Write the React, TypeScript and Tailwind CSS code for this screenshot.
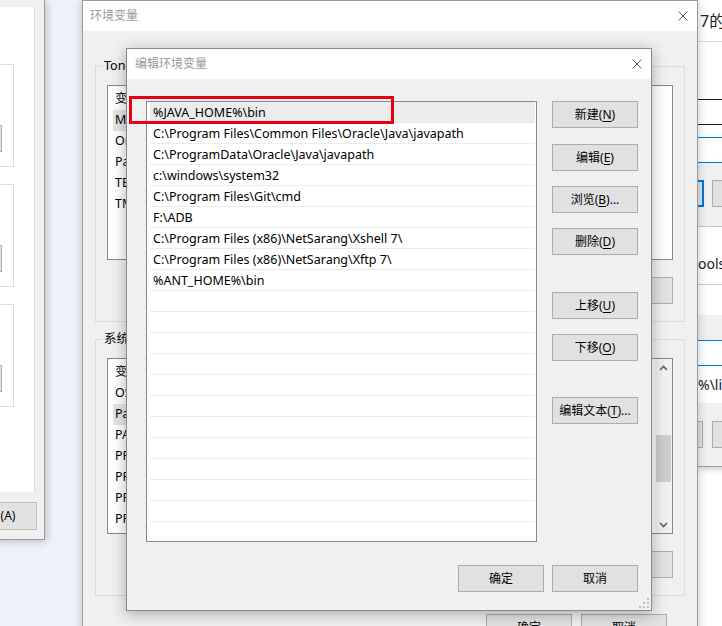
import React from 'react';

type Kids = { children?: React.ReactNode; className?: string };

const Btn = ({ children, className = '' }: Kids) => (
  <div
    className={`flex shrink-0 items-center justify-center border border-[#adadad] bg-[#e1e1e1] text-[12px] text-black ${className}`}
  >
    {children}
  </div>
);

// underlined access key
const U = ({ children }: Kids) => <span className="underline underline-offset-[2px]">{children}</span>;

const CloseX = () => (
  <svg width="10" height="10" viewBox="0 0 10 10" className="shrink-0">
    <path d="M0.5 0.5 L9.5 9.5 M9.5 0.5 L0.5 9.5" stroke="#555" strokeWidth="1" fill="none" />
  </svg>
);

const Chevron = ({ up }: { up?: boolean }) => (
  <svg width="9" height="6" viewBox="0 0 9 6">
    <path d={up ? 'M1 5 L4.5 1.5 L8 5' : 'M1 1 L4.5 4.5 L8 1'} stroke="#606060" strokeWidth="1.6" fill="none" />
  </svg>
);

const GroupBox = ({ label, children, className = '' }: Kids & { label: string }) => (
  <div className={`relative shrink-0 border border-[#dcdcdc] px-[11px] pt-[18px] ${className}`}>
    <span className="absolute -top-[9px] left-[6px] bg-[#f0f0f0] px-[2px] text-[12.5px] leading-[16px] text-black">
      {label}
    </span>
    {children}
  </div>
);

const VarList = ({
  rows,
  selected,
  scroll,
  className = '',
}: {
  rows: [string, string][];
  selected: number;
  scroll?: boolean;
  className?: string;
}) => (
  <div className={`flex overflow-hidden border border-[#828790] bg-white ${className}`}>
    <div className="flex-1 pt-[3px]">
      {rows.map(([name, value], i) => (
        <div
          key={i}
          className={`ml-[5px] flex h-[21px] w-[500px] items-center pl-[2px] text-[12.5px] text-black ${
            i === selected ? 'bg-[#e5e5e5]' : ''
          }`}
        >
          <span className="w-[200px] shrink-0">{name}</span>
          <span className="whitespace-nowrap">{value}</span>
        </div>
      ))}
    </div>
    {scroll && (
      <div className="flex w-[17px] shrink-0 flex-col bg-[#f0f0f0]">
        <div className="flex h-[17px] items-center justify-center">
          <Chevron up />
        </div>
        <div className="ml-[1px] mt-[59px] h-[47px] w-[15px] bg-[#cdcdcd]" />
        <div className="flex-1" />
        <div className="flex h-[17px] items-center justify-center">
          <Chevron />
        </div>
      </div>
    )}
  </div>
);

const userRows: [string, string][] = [
  ['变量', '值'],
  ['MAVEN_HOME', 'D:\\apache-maven'],
  ['OneDrive', 'C:\\Users\\Tong\\OneDrive'],
  ['Path', '%USERPROFILE%\\AppData\\Local'],
  ['TEMP', '%USERPROFILE%\\AppData\\Local\\Temp'],
  ['TMP', '%USERPROFILE%\\AppData\\Local\\Temp'],
];

const sysRows: [string, string][] = [
  ['变量', '值'],
  ['OS', 'Windows_NT'],
  ['Path', '%JAVA_HOME%\\bin;C:\\Program Files'],
  ['PATHEXT', '.COM;.EXE;.BAT;.CMD'],
  ['PROCESSOR_ARCHITECTURE', 'AMD64'],
  ['PROCESSOR_IDENTIFIER', 'Intel64 Family 6'],
  ['PROCESSOR_LEVEL', '6'],
  ['PROCESSOR_REVISION', '9e0a'],
];

const paths = [
  '%JAVA_HOME%\\bin',
  'C:\\Program Files\\Common Files\\Oracle\\Java\\javapath',
  'C:\\ProgramData\\Oracle\\Java\\javapath',
  'c:\\windows\\system32',
  'C:\\Program Files\\Git\\cmd',
  'F:\\ADB',
  'C:\\Program Files (x86)\\NetSarang\\Xshell 7\\',
  'C:\\Program Files (x86)\\NetSarang\\Xftp 7\\',
  '%ANT_HOME%\\bin',
];
const pathRows = [...paths, ...Array(12).fill('')];

const LeftWindow = () => (
  <div className="absolute left-[-200px] top-0 flex h-[540px] w-[245px] flex-col border-b border-r border-[#9d9d9d] bg-[#f0f0f0] shadow-[2px_2px_8px_rgba(0,0,0,0.2)]">
    <div className="ml-auto mr-[9px] mt-[7px] flex h-[485px] w-[220px] flex-col items-end border-r border-[#d9d9d9] bg-white pr-[20px]">
      {[57, 17, 17].map((mt, i) => (
        <div
          key={i}
          className={`flex h-[103px] w-[180px] shrink-0 justify-end border border-[#dcdcdc] pr-[11px] pt-[60px] ${
            mt === 57 ? 'mt-[57px]' : 'mt-[17px]'
          }`}
        >
          <Btn className="h-[27px] w-[86px]">编辑(E)...</Btn>
        </div>
      ))}
    </div>
    <Btn className="ml-auto mr-[7px] mt-[10px] h-[28px] w-[86px] border-[#bfbfbf] bg-[#cccccc] pl-[4px] text-[#8a8a8a]">
      应用(A)
    </Btn>
  </div>
);

const MiddleWindow = () => (
  <div className="absolute left-[82px] top-0 flex h-[660px] w-[616px] flex-col border border-[#9a9a9a] bg-[#f0f0f0] shadow-[0_0_10px_rgba(0,0,0,0.22)]">
    <div className="flex h-[30px] shrink-0 items-center justify-between bg-white pl-[7px] pr-[9px] text-[12px] text-[#9a9a9a]">
      <span>环境变量</span>
      <CloseX />
    </div>
    <div className="flex flex-col px-[12px]">
      <GroupBox label="Tong 的用户变量(U)" className="mt-[35px] h-[256px]">
        <VarList rows={userRows} selected={1} className="h-[175px]" />
        <div className="mt-[17px] flex justify-end gap-[9px]">
          <Btn className="h-[27px] w-[86px]">新建(N)...</Btn>
          <Btn className="h-[27px] w-[86px]">编辑(E)...</Btn>
          <Btn className="h-[27px] w-[86px]">删除(D)</Btn>
        </div>
      </GroupBox>
      <GroupBox label="系统变量(S)" className="mt-[17px] h-[257px]">
        <VarList rows={sysRows} selected={2} scroll className="h-[176px]" />
        <div className="mt-[17px] flex justify-end gap-[9px]">
          <Btn className="h-[27px] w-[86px]">新建(W)...</Btn>
          <Btn className="h-[27px] w-[86px]">编辑(I)...</Btn>
          <Btn className="h-[27px] w-[86px]">删除(L)</Btn>
        </div>
      </GroupBox>
      <div className="mr-[18px] mt-[18px] flex justify-end gap-[9px]">
        <Btn className="h-[27px] w-[86px]">确定</Btn>
        <Btn className="h-[27px] w-[86px]">取消</Btn>
      </div>
    </div>
  </div>
);

const RightWindow = () => (
  <div className="absolute left-[698px] top-0 flex h-[467px] w-[200px] flex-col border-b border-[#a0a0a0] bg-white shadow-[0_2px_6px_rgba(0,0,0,0.2)]">
    <div className="flex h-[41px] shrink-0 items-center pl-[2px] text-[16px] text-[#222]">7的属性</div>
    <div className="h-[1px] bg-[#dadada]" />
    <div className="h-[57px]" />
    <div className="h-[1px] bg-[#1a1a1a]" />
    <div className="h-[24px]" />
    <div className="h-[1px] bg-[#1a1a1a]" />
    <div className="h-[12px]" />
    <div className="h-[1px] bg-[#0078d7]" />
    <div className="h-[24px]" />
    <div className="h-[1px] bg-[#0078d7]" />
    <div className="flex h-[63px] shrink-0 gap-[8px] bg-[#f0f0f0] pt-[17px]">
      <div className="h-[27px] w-[6px] border-y-2 border-r-2 border-[#0078d7] bg-[#e1e1e1]" />
      <div className="h-[27px] w-[40px] border border-[#adadad] bg-[#e1e1e1]" />
    </div>
    <div className="h-[1px] bg-[#c8c8c8]" />
    <div className="flex h-[57px] shrink-0 items-end pb-[10px] text-[14px] text-[#222]">ools</div>
    <div className="h-[1px] bg-[#d0d0d0]" />
    <div className="h-[30px]" />
    <div className="h-[25px] bg-[#f0f0f0]" />
    <div className="h-[1px] bg-[#0078d7]" />
    <div className="h-[24px]" />
    <div className="h-[1px] bg-[#0078d7]" />
    <div className="flex h-[37px] shrink-0 items-center text-[14px] text-[#222]">%\lib</div>
    <div className="flex flex-1 gap-[9px] bg-[#f0f0f0] pt-[18px]">
      <div className="h-[27px] w-[5px] border-y border-r border-[#adadad] bg-[#e1e1e1]" />
      <div className="h-[27px] w-[40px] border border-[#adadad] bg-[#e1e1e1]" />
    </div>
  </div>
);

const EditDialog = () => (
  <div className="absolute left-[126px] top-[48px] flex h-[563px] w-[526px] flex-col border border-[#8a8a8a] bg-[#f0f0f0] shadow-[0_3px_14px_rgba(0,0,0,0.3)]">
    <div className="flex h-[30px] shrink-0 items-center justify-between bg-white pl-[8px] pr-[9px] text-[12px] text-[#9a9a9a]">
      <span>编辑环境变量</span>
      <CloseX />
    </div>
    <div className="flex pl-[19px] pt-[22px]">
      <div className="h-[441px] w-[391px] shrink-0 overflow-hidden border border-[#828790] bg-white">
        {pathRows.map((p, i) => (
          <div
            key={i}
            className={`ml-[3px] mr-[1px] flex h-[21px] items-center border-b border-[#ebebeb] pl-[3px] pt-[2px] text-[12.5px] text-black ${
              i === 0 ? 'bg-[#ececec]' : ''
            }`}
          >
            {p}
          </div>
        ))}
      </div>
      <div className="ml-[15px] flex w-[86px] flex-col">
        <Btn className="h-[27px]">
          新建(<U>N</U>)
        </Btn>
        <Btn className="mt-[16px] h-[27px]">
          编辑(<U>E</U>)
        </Btn>
        <Btn className="mt-[15px] h-[27px]">
          浏览(<U>B</U>)...
        </Btn>
        <Btn className="mt-[15px] h-[27px]">
          删除(<U>D</U>)
        </Btn>
        <Btn className="mt-[37px] h-[27px]">
          上移(<U>U</U>)
        </Btn>
        <Btn className="mt-[15px] h-[27px]">
          下移(<U>O</U>)
        </Btn>
        <Btn className="mt-[36px] h-[27px]">
          编辑文本(<U>T</U>)...
        </Btn>
      </div>
    </div>
    <div className="mt-[23px] flex justify-end gap-[8px] pr-[13px]">
      <Btn className="h-[27px] w-[86px]">确定</Btn>
      <Btn className="h-[27px] w-[86px]">取消</Btn>
    </div>
    <svg className="absolute bottom-[2px] right-[2px]" width="10" height="10" viewBox="0 0 10 10">
      {[
        [8, 0],
        [4, 4],
        [8, 4],
        [0, 8],
        [4, 8],
        [8, 8],
      ].map(([x, y]) => (
        <rect key={`${x}-${y}`} x={x} y={y} width="2" height="2" fill="#bdbdbd" />
      ))}
    </svg>
  </div>
);

export default function App() {
  return (
    <div className="relative h-[626px] w-[722px] overflow-hidden bg-gradient-to-r from-[#edf2fb] to-white font-[Noto_Sans,Noto_Sans_CJK_SC,sans-serif]">
      <LeftWindow />
      <RightWindow />
      <MiddleWindow />
      <EditDialog />
      {/* red highlight drawn over the first path */}
      <div className="absolute left-[129px] top-[96px] h-[28px] w-[265px] border-[3px] border-[#e50012]" />
    </div>
  );
}
